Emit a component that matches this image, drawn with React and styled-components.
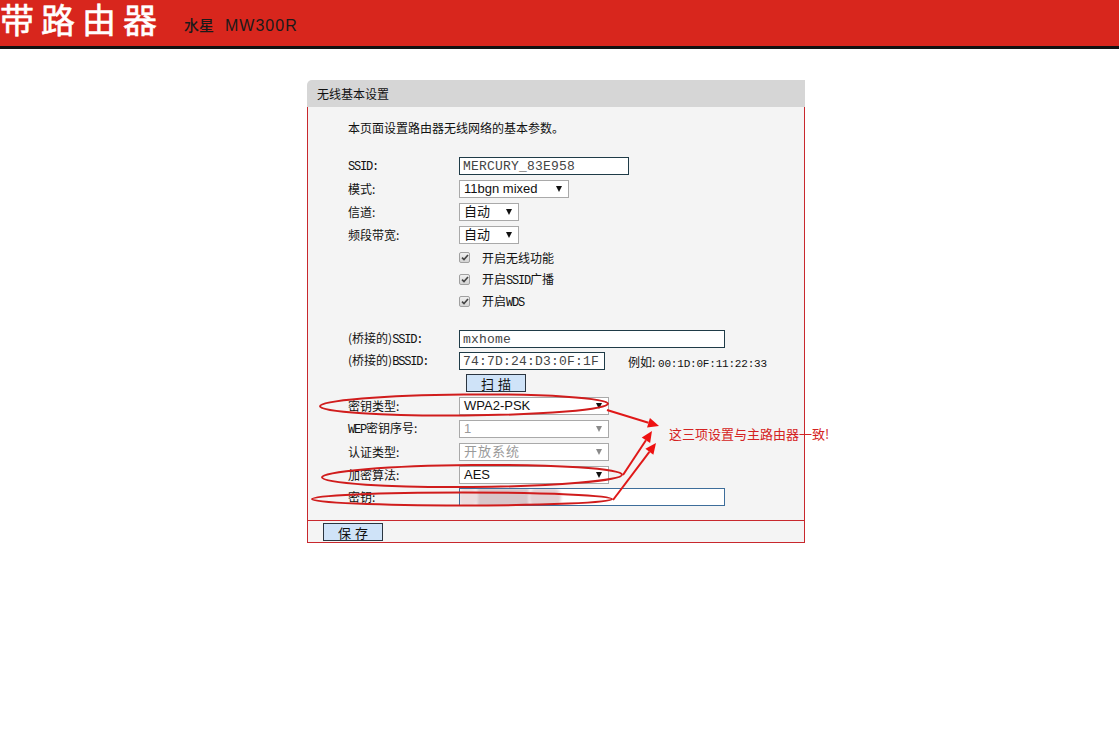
import React from "react";
import styled, { createGlobalStyle } from "styled-components";

const Global = createGlobalStyle`
  html, body { margin: 0; padding: 0; background: #fff; }
  body { font-family: "Noto Sans CJK SC", "Liberation Sans", sans-serif; color: #111; }
`;

const Page = styled.div`
  position: relative;
  width: 1119px;
  min-height: 737px;
  overflow: hidden;
`;

const Header = styled.header`
  height: 46px;
  background: #d8261d;
  border-bottom: 3px solid #111;
  display: flex;
  align-items: center;
  overflow: hidden;
`;

const Brand = styled.div`
  color: #fff;
  font: 400 34px/1 "Noto Sans CJK SC", sans-serif;
  letter-spacing: 7px;
  margin-top: -8px;
  white-space: nowrap;
  -webkit-text-stroke: 0.6px #fff;
`;

const Model = styled.div`
  display: flex;
  align-items: baseline;
  gap: 11px;
  margin-left: 20px;
  margin-top: 4px;
  color: #1a1a1a;
`;

const ModelCn = styled.span`
  font: 500 15px/1 "Noto Sans CJK SC", serif;
`;

const ModelEn = styled.span`
  font: 16px/1 "Liberation Sans", Arial, sans-serif;
  letter-spacing: 1px;
`;

const Panel = styled.section`
  width: 498px;
  margin: 31px 0 0 307px;
`;

const PanelTitle = styled.div`
  height: 27px;
  background: #d6d6d6;
  border-top-left-radius: 5px;
  padding-left: 10px;
  display: flex;
  align-items: center;
  font-size: 12px;
  color: #111;
`;

const PanelBody = styled.div`
  background: #f4f4f4;
  border: 1px solid #c8282d;
  border-top: none;
`;

const Content = styled.div`
  padding: 14px 0 12px 40px;
`;

const Desc = styled.div`
  font-size: 12px;
  line-height: 14px;
  color: #111;
  margin-bottom: 20px;
`;

const Row = styled.div`
  display: grid;
  grid-template-columns: 111px auto;
  align-items: center;
  height: ${(p) => p.h || 23}px;
`;

const Spacer = styled.div`
  height: ${(p) => p.h}px;
`;

const Label = styled.div`
  font-size: 12px;
  line-height: 14px;
  color: #111;
  white-space: nowrap;
`;

const Mono = styled.span`
  font-family: "Liberation Mono", monospace;
  font-size: ${(p) => p.size || 12}px;
  letter-spacing: ${(p) => p.ls ?? -1.2}px;
`;

const Field = styled.div`
  display: flex;
  align-items: center;
`;

const TextBox = styled.div`
  box-sizing: border-box;
  width: ${(p) => p.w}px;
  height: 18px;
  background: #fff;
  border: 1px solid ${(p) => (p.focus ? "#3d6d9a" : "#1f3b47")};
  padding-left: 3px;
  display: flex;
  align-items: center;
  overflow: hidden;
  font: 13px/1 "Liberation Mono", monospace;
  letter-spacing: 0.2px;
  color: #444;
  white-space: nowrap;
`;

const Select = styled.div`
  box-sizing: border-box;
  width: ${(p) => p.w}px;
  height: 18px;
  background: #fff;
  border: 1px solid #a9a9a9;
  padding: 0 0 0 4px;
  display: flex;
  align-items: center;
  justify-content: space-between;
  font: 13px/1 "Liberation Sans", "Noto Sans CJK SC", sans-serif;
  color: ${(p) => (p.disabled ? "#9a9a9a" : "#111")};
  white-space: nowrap;
`;

const SelectText = styled.span`
  letter-spacing: ${(p) => (p.cjk ? "1px" : "0")};
`;

const Arrow = styled.span`
  width: 0;
  height: 0;
  margin-right: 6px;
  border-left: 3.5px solid transparent;
  border-right: 3.5px solid transparent;
  border-top: 6px solid ${(p) => (p.disabled ? "#8a8a8a" : "#111")};
`;

const Check = styled.span`
  box-sizing: border-box;
  width: 11px;
  height: 11px;
  border: 1px solid #a0a0a0;
  border-radius: 2px;
  background: linear-gradient(#f0f0f0, #d4d4d4);
  display: inline-flex;
  align-items: center;
  justify-content: center;
  margin-right: 12px;
`;

const CheckText = styled.span`
  font-size: 12px;
  color: #111;
`;

const Btn = styled.div`
  box-sizing: border-box;
  width: 60px;
  height: 18px;
  background: #cfe3f8;
  border: 1px solid #2a3540;
  display: flex;
  align-items: center;
  justify-content: center;
  font-size: 13px;
  letter-spacing: 4px;
  text-indent: 4px;
  color: #111;
  margin-left: ${(p) => p.ml || 0}px;
`;

const Example = styled.span`
  margin-left: 23px;
  font-size: 12px;
  color: #111;
`;

const Blob = styled.span`
  display: block;
  height: 19px;
  width: ${(p) => p.w}px;
  background: ${(p) => p.c};
  filter: blur(1.5px);
  border-radius: ${(p) => p.r || 0}px;
`;

const BlurRow = styled.div`
  display: flex;
  margin-left: -4px;
`;

const Footer = styled.div`
  border-top: 1px solid #c8282d;
  height: 22px;
  padding: 2px 0 0 15px;
  box-sizing: border-box;
`;

const Overlay = styled.svg`
  position: absolute;
  left: 0;
  top: 0;
  pointer-events: none;
`;

const Note = styled.div`
  position: absolute;
  left: 669px;
  top: 426px;
  font-size: 13px;
  line-height: 16px;
  color: #d42323;
  white-space: nowrap;
`;

function CheckIcon() {
  return (
    <svg width="8" height="7" viewBox="0 0 8 7">
      <path d="M1 3.6 L3 5.6 L7 1" fill="none" stroke="#444" strokeWidth="1.6" />
    </svg>
  );
}

function Sel({ w, children, disabled, cjk }) {
  return (
    <Select w={w} disabled={disabled}>
      <SelectText cjk={cjk}>{children}</SelectText>
      <Arrow disabled={disabled} />
    </Select>
  );
}

function CheckRow({ children }) {
  return (
    <Row h={22}>
      <span />
      <Field>
        <Check>
          <CheckIcon />
        </Check>
        <CheckText>{children}</CheckText>
      </Field>
    </Row>
  );
}

function ArrowLine({ x1, y1, x2, y2 }) {
  const a = Math.atan2(y2 - y1, x2 - x1);
  const L = 11;
  const W = 5;
  const bx = x2 - L * Math.cos(a);
  const by = y2 - L * Math.sin(a);
  const px = -Math.sin(a) * W;
  const py = Math.cos(a) * W;
  return (
    <g>
      <line x1={x1} y1={y1} x2={bx} y2={by} stroke="#e01818" strokeWidth="2" />
      <polygon
        points={`${x2},${y2} ${bx + px},${by + py} ${bx - px},${by - py}`}
        fill="#ee1111"
      />
    </g>
  );
}

export default function App() {
  return (
    <Page>
      <Global />
      <Header>
        <Brand>带路由器</Brand>
        <Model>
          <ModelCn>水星</ModelCn>
          <ModelEn>MW300R</ModelEn>
        </Model>
      </Header>

      <Panel>
        <PanelTitle>无线基本设置</PanelTitle>
        <PanelBody>
          <Content>
            <Desc>本页面设置路由器无线网络的基本参数。</Desc>

            <Row h={22}>
              <Label>
                <Mono>SSID:</Mono>
              </Label>
              <Field>
                <TextBox w={170}>MERCURY_83E958</TextBox>
              </Field>
            </Row>
            <Row>
              <Label>模式:</Label>
              <Field>
                <Sel w={110}>11bgn mixed</Sel>
              </Field>
            </Row>
            <Row>
              <Label>信道:</Label>
              <Field>
                <Sel w={60}>自动</Sel>
              </Field>
            </Row>
            <Row>
              <Label>频段带宽:</Label>
              <Field>
                <Sel w={60}>自动</Sel>
              </Field>
            </Row>
            <CheckRow>开启无线功能</CheckRow>
            <CheckRow>
              开启<Mono>SSID</Mono>广播
            </CheckRow>
            <CheckRow>
              开启<Mono>WDS</Mono>
            </CheckRow>

            <Spacer h={16} />

            <Row h={22}>
              <Label>
                (桥接的)<Mono>SSID:</Mono>
              </Label>
              <Field>
                <TextBox w={266}>mxhome</TextBox>
              </Field>
            </Row>
            <Row h={22}>
              <Label>
                (桥接的)<Mono>BSSID:</Mono>
              </Label>
              <Field>
                <TextBox w={146}>74:7D:24:D3:0F:1F</TextBox>
                <Example>
                  例如: <Mono size={11} ls={-0.2}>00:1D:0F:11:22:33</Mono>
                </Example>
              </Field>
            </Row>
            <Row h={22}>
              <span />
              <Field>
                <Btn ml={7}>扫描</Btn>
              </Field>
            </Row>
            <Row>
              <Label>密钥类型:</Label>
              <Field>
                <Sel w={150}>WPA2-PSK</Sel>
              </Field>
            </Row>
            <Row>
              <Label>
                <Mono>WEP</Mono>密钥序号:
              </Label>
              <Field>
                <Sel w={150} disabled>
                  1
                </Sel>
              </Field>
            </Row>
            <Row>
              <Label>认证类型:</Label>
              <Field>
                <Sel w={150} disabled cjk>
                  开放系统
                </Sel>
              </Field>
            </Row>
            <Row>
              <Label>加密算法:</Label>
              <Field>
                <Sel w={150}>AES</Sel>
              </Field>
            </Row>
            <Row h={22}>
              <Label>密钥:</Label>
              <Field>
                <TextBox w={266} focus>
                  <BlurRow>
                    <Blob w={18} c="#ecdcde" r={6} />
                    <Blob w={52} c="#d8c6ca" />
                    <Blob w={32} c="#e4d2d5" r={8} />
                  </BlurRow>
                </TextBox>
              </Field>
            </Row>
          </Content>
          <Footer>
            <Btn>保存</Btn>
          </Footer>
        </PanelBody>
      </Panel>

      <Overlay width="1119" height="737" viewBox="0 0 1119 737">
        <g fill="none" stroke="#d01c1c" strokeWidth="2">
          <ellipse cx="464" cy="405" rx="144" ry="10.5" transform="rotate(-0.5 464 405)" />
          <ellipse cx="472" cy="476" rx="150" ry="11" transform="rotate(-0.5 472 476)" />
          <ellipse cx="462" cy="499" rx="150" ry="6.5" />
        </g>
        <ArrowLine x1={607} y1={410} x2={659} y2={426} />
        <ArrowLine x1={623} y1={475} x2={652} y2={431} />
        <ArrowLine x1={613} y1={500} x2={656} y2={443} />
      </Overlay>
      <Note>这三项设置与主路由器一致!</Note>
    </Page>
  );
}
